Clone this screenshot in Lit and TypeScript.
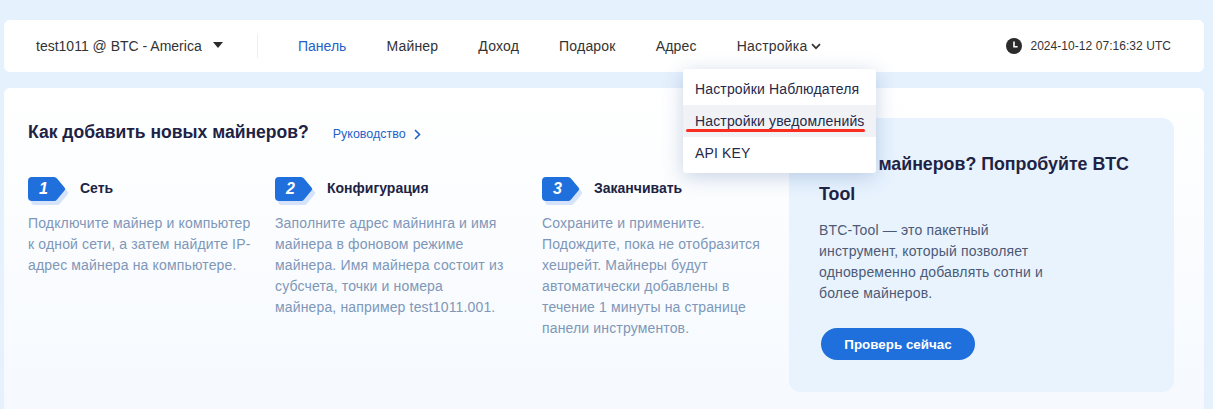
import { LitElement, html, css } from "lit";
import { customElement } from "lit/decorators.js";

const steps = [
  { n: "1", title: "Сеть", text: "Подключите майнер и компьютер к одной сети, а затем найдите IP-адрес майнера на компьютере." },
  { n: "2", title: "Конфигурация", text: "Заполните адрес майнинга и имя майнера в фоновом режиме майнера. Имя майнера состоит из субсчета, точки и номера майнера, например test1011.001." },
  { n: "3", title: "Заканчивать", text: "Сохраните и примените. Подождите, пока не отобразится хешрейт. Майнеры будут автоматически добавлены в течение 1 минуты на странице панели инструментов." },
];

@customElement("app-root")
export class AppRoot extends LitElement {
  static styles = css`
    :host { display: block; height: 409px; overflow: hidden; background: #e5f1fd; font-family: "Liberation Sans", Arial, sans-serif; position: relative; }
    .page { display: flex; flex-direction: column; gap: 16px; padding: 20px 9px 0 4px; }
    .bar { height: 52px; background: #fff; border-radius: 6px; display: flex; align-items: center; padding: 0 33px 0 32px; color: #333; font-size: 14px; }
    .account { width: 221px; display: flex; align-items: center; gap: 11px; flex: none; color: #333; }
    .tri { width: 0; height: 0; border: 5px solid transparent; border-top: 6px solid #2b2b2b; border-bottom: 0; position: relative; top: -1px; }
    .sep { width: 1px; height: 24px; background: #eceff2; flex: none; }
    .nav { display: flex; gap: 40px; margin-left: 40px; flex: 1; letter-spacing: 0.2px; }
    .nav a { color: #333; white-space: nowrap; display: flex; align-items: center; gap: 3px; }
    .nav a.on { color: #1e62c8; letter-spacing: 0; }
    .time { display: flex; align-items: center; gap: 8px; font-size: 12px; letter-spacing: 0.05px; color: #333; }
    .card { height: 330px; background: linear-gradient(#ffffff, #f5f9fe); border-radius: 6px; padding: 30px 30px 0 24px; display: flex; box-sizing: border-box; }
    .left { width: 761px; flex: none; padding-top: 2px; }
    .head { display: flex; align-items: center; gap: 24px; }
    h2 { margin: 0; font-size: 17.55px; line-height: 24px; font-weight: 700; color: #1e2344; }
    .guide { color: #1e62c8; font-size: 12.5px; display: flex; align-items: center; gap: 8px; position: relative; top: 2px; }
    .steps { display: grid; grid-template-columns: 247px 267px 247px; margin-top: 33px; }
    .st { display: flex; align-items: flex-start; gap: 13px; height: 28px; font-size: 14px; line-height: 22px; font-weight: 700; color: #1e2344; }
    .badge { position: relative; width: 39px; height: 28px; flex: none; }
    .badge svg { display: block; }
    .badge b { position: absolute; left: 0; top: 0; width: 31px; height: 24px; display: flex; align-items: center; justify-content: center; color: #fff; font-size: 16px; font-style: italic; font-weight: 700; }
    .step p { margin: 8px 0 0; max-width: 230px; font-size: 14px; line-height: 21px; color: #7e97b8; letter-spacing: 0.15px; }
    .promo { width: 385px; height: 274px; background: #e8f3fe; border-radius: 12px; box-sizing: border-box; padding: 31px 30px; }
    .promo h3 { margin: 0; font-size: 17.8px; line-height: 30px; font-weight: 700; color: #1e2344; }
    .promo p { margin: 11px 0 0; font-size: 14px; line-height: 21px; color: #4d5a76; width: 240px; letter-spacing: 0.17px; }
    .btn { margin: 24px 0 0 2px; width: 154px; height: 32px; border-radius: 16px; background: #1f6fdc; color: #fff; font-size: 13.4px; font-weight: 700; display: flex; align-items: center; justify-content: center; }
    .menu { position: absolute; left: 683px; top: 69px; width: 193px; padding: 4px 0; background: #fff; border-radius: 3px; box-shadow: 0 4px 20px rgba(60, 100, 160, 0.28); font-size: 14px; color: #26294a; letter-spacing: 0.15px; }
    .menu div { height: 32px; line-height: 32px; padding-left: 12px; white-space: nowrap; }
    .menu div.hov { background: #f0f2f6; }
    .red { position: absolute; left: 686px; top: 129px; width: 179px; height: 3px; background: #fb2d1f; border-radius: 1.5px; }
  `;

  render() {
    return html`
      <div class="page">
        <div class="bar">
          <div class="account">test1011 @ BTC - America <span class="tri"></span></div>
          <div class="sep"></div>
          <div class="nav">
            <a class="on">Панель</a><a>Майнер</a><a>Доход</a><a>Подарок</a><a>Адрес</a>
            <a>Настройка
              <svg width="10" height="7" viewBox="0 0 10 7"><path d="M1 1.2 5 5.2 9 1.2" fill="none" stroke="#333" stroke-width="1.7"/></svg>
            </a>
          </div>
          <div class="time">
            <svg width="16" height="16" viewBox="0 0 16 16"><circle cx="8" cy="8" r="8" fill="#2b2b2b"/><path d="M8 3.5V8.7H11.6" fill="none" stroke="#fff" stroke-width="1.6"/></svg>
            2024-10-12 07:16:32 UTC
          </div>
        </div>
        <div class="card">
          <div class="left">
            <div class="head">
              <h2>Как добавить новых майнеров?</h2>
              <span class="guide">Руководство
                <svg width="7" height="11" viewBox="0 0 7 11"><path d="M1 1 5.5 5.5 1 10" fill="none" stroke="#1e62c8" stroke-width="1.6"/></svg>
              </span>
            </div>
            <div class="steps">
              ${steps.map(s => html`
                <div class="step">
                  <div class="st">
                    <span class="badge">
                      <svg width="41" height="28" viewBox="0 0 41 28">
                        <path d="M7 4H29Q31 4 32 5.500L39.500 14.500Q41 16 39.500 17.500L32 26.500Q31 28 29 28H7Q3 28 3 24V8Q3 4 7 4Z" fill="#d5e4fa"/>
                        <path d="M4 0H26Q28 0 29 1.500L36.500 10.500Q38 12 36.500 13.500L29 22.500Q28 24 26 24H4Q0 24 0 20V4Q0 0 4 0Z" fill="#1f6fdc"/>
                      </svg>
                      <b>${s.n}</b>
                    </span>
                    ${s.title}
                  </div>
                  <p>${s.text}</p>
                </div>`)}
            </div>
          </div>
          <div class="promo">
            <h3>Много майнеров? Попробуйте BTC Tool</h3>
            <p>BTC-Tool — это пакетный инструмент, который позволяет одновременно добавлять сотни и более майнеров.</p>
            <div class="btn">Проверь сейчас</div>
          </div>
        </div>
      </div>
      <div class="menu">
        <div>Настройки Наблюдателя</div>
        <div class="hov">Настройки уведомленийs</div>
        <div>API KEY</div>
      </div>
      <div class="red"></div>
    `;
  }
}
